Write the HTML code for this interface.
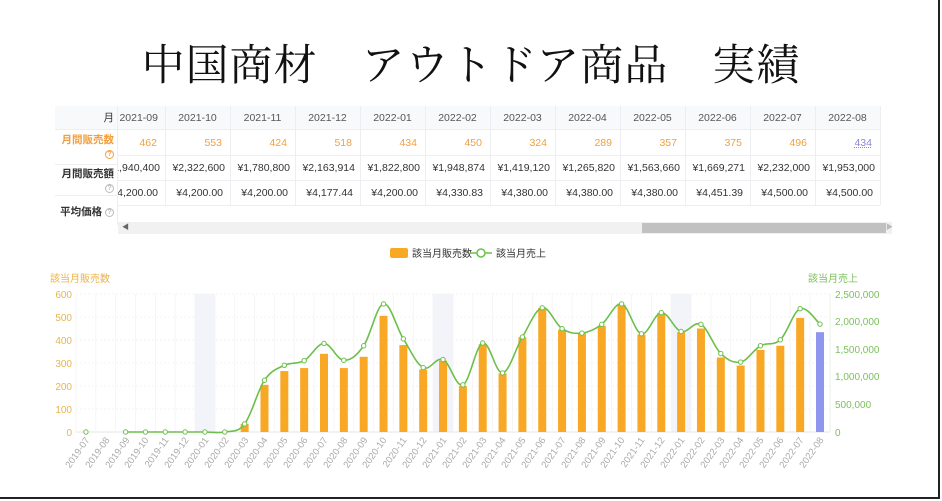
<!DOCTYPE html>
<html><head><meta charset="utf-8">
<style>
*{margin:0;padding:0;box-sizing:border-box}
body{width:942px;height:501px;background:#fff;position:relative;overflow:hidden;font-family:"Liberation Sans","Noto Sans CJK JP",sans-serif}
.frame-r{position:absolute;left:938px;top:0;width:2px;height:499px;background:#222}
.frame-b{position:absolute;left:0;top:497px;width:940px;height:2px;background:#222}
h1{position:absolute;left:0;width:942px;top:32px;text-align:center;font-family:"Noto Serif CJK JP","Noto Serif CJK SC",serif;font-weight:400;font-size:43px;color:#111;letter-spacing:1px;white-space:pre}
.hd{position:absolute;top:106px;height:23px;background:#f8f9fb}
.cell{position:absolute;font-size:10.5px;color:#333;text-align:right;white-space:nowrap}
.vl{position:absolute;width:1px;background:#eceef2}
.hl{position:absolute;height:1px;background:#eceef2}
.q{display:inline-block;width:9px;height:9px;border:1px solid #bbb;border-radius:50%;font-size:7px;line-height:7px;text-align:center;color:#bbb;vertical-align:middle}
.lab{position:absolute;left:50px;width:68px;text-align:right;font-size:10.5px;font-weight:bold;color:#333;padding-right:4px;white-space:nowrap;line-height:14px}
</style></head><body>
<h1>中国商材　アウトドア商品　実績</h1>

<!-- table -->
<div class="hd" style="left:55px;width:825px"></div>
<div class="hl" style="left:118px;top:129px;width:762px"></div>
<div class="hl" style="left:118px;top:155px;width:762px"></div>
<div class="hl" style="left:118px;top:180px;width:762px"></div>
<div class="hl" style="left:118px;top:205px;width:762px"></div>
<div id="cols"></div>
<div style="position:absolute;left:222px;top:222px;width:1px;height:1px"></div>
<div style="position:absolute;left:118px;top:222px;width:774px;height:12px;background:#f1f1f1"></div>
<div style="position:absolute;left:642px;top:223px;width:244px;height:10px;background:#c1c1c1"></div>
<div style="position:absolute;left:122px;top:222px;font-size:7px;color:#666">◀</div>
<div style="position:absolute;left:886px;top:222px;font-size:7px;color:#bbb">▶</div>

<svg id="ch" width="942" height="501" style="position:absolute;left:0;top:0" font-family="Liberation Sans, Noto Sans CJK JP, sans-serif">
<rect x="390" y="248" width="18" height="10" rx="2" fill="#f9a825"/>
<text x="412" y="257" font-size="10" fill="#333">該当月販売数</text>
<line x1="470" y1="253" x2="492" y2="253" stroke="#6cc04a" stroke-width="1.5"/>
<circle cx="481" cy="253" r="4" fill="#fff" stroke="#6cc04a" stroke-width="1.5"/>
<text x="496" y="257" font-size="10" fill="#333">該当月売上</text>
<text x="50" y="282" font-size="10" fill="#e9b44c">該当月販売数</text>
<text x="808" y="282" font-size="10" fill="#7cc05a">該当月売上</text>
<g font-size="10" fill="#e9b44c" text-anchor="end">
<text x="72" y="298">600</text><text x="72" y="321">500</text><text x="72" y="344">400</text><text x="72" y="367">300</text><text x="72" y="390">200</text><text x="72" y="413">100</text><text x="72" y="436">0</text>
</g>
<g font-size="10" fill="#7cc05a">
<text x="835" y="298">2,500,000</text><text x="835" y="325">2,000,000</text><text x="835" y="353">1,500,000</text><text x="835" y="380">1,000,000</text><text x="835" y="408">500,000</text><text x="835" y="436">0</text>
</g>
<line x1="76" y1="294" x2="76" y2="432" stroke="#e9c46a"/>
<line x1="830" y1="294" x2="830" y2="432" stroke="#8cc86a"/>
<g id="grid"></g>
<g id="bars"></g>
<path id="ln" fill="none" stroke="#6cc04a" stroke-width="1.6"/>
<g id="pts"></g>
<g font-size="9.5" fill="#aaa" id="xl">
<text transform="translate(90,440) rotate(-55)" text-anchor="end">2019-07</text>
<text transform="translate(110,440) rotate(-55)" text-anchor="end">2019-08</text>
<text transform="translate(130,440) rotate(-55)" text-anchor="end">2019-09</text>
<text transform="translate(149,440) rotate(-55)" text-anchor="end">2019-10</text>
<text transform="translate(169,440) rotate(-55)" text-anchor="end">2019-11</text>
<text transform="translate(189,440) rotate(-55)" text-anchor="end">2019-12</text>
<text transform="translate(209,440) rotate(-55)" text-anchor="end">2020-01</text>
<text transform="translate(229,440) rotate(-55)" text-anchor="end">2020-02</text>
<text transform="translate(249,440) rotate(-55)" text-anchor="end">2020-03</text>
<text transform="translate(268,440) rotate(-55)" text-anchor="end">2020-04</text>
<text transform="translate(288,440) rotate(-55)" text-anchor="end">2020-05</text>
<text transform="translate(308,440) rotate(-55)" text-anchor="end">2020-06</text>
<text transform="translate(328,440) rotate(-55)" text-anchor="end">2020-07</text>
<text transform="translate(348,440) rotate(-55)" text-anchor="end">2020-08</text>
<text transform="translate(368,440) rotate(-55)" text-anchor="end">2020-09</text>
<text transform="translate(387,440) rotate(-55)" text-anchor="end">2020-10</text>
<text transform="translate(407,440) rotate(-55)" text-anchor="end">2020-11</text>
<text transform="translate(427,440) rotate(-55)" text-anchor="end">2020-12</text>
<text transform="translate(447,440) rotate(-55)" text-anchor="end">2021-01</text>
<text transform="translate(467,440) rotate(-55)" text-anchor="end">2021-02</text>
<text transform="translate(487,440) rotate(-55)" text-anchor="end">2021-03</text>
<text transform="translate(506,440) rotate(-55)" text-anchor="end">2021-04</text>
<text transform="translate(526,440) rotate(-55)" text-anchor="end">2021-05</text>
<text transform="translate(546,440) rotate(-55)" text-anchor="end">2021-06</text>
<text transform="translate(566,440) rotate(-55)" text-anchor="end">2021-07</text>
<text transform="translate(586,440) rotate(-55)" text-anchor="end">2021-08</text>
<text transform="translate(606,440) rotate(-55)" text-anchor="end">2021-09</text>
<text transform="translate(625,440) rotate(-55)" text-anchor="end">2021-10</text>
<text transform="translate(645,440) rotate(-55)" text-anchor="end">2021-11</text>
<text transform="translate(665,440) rotate(-55)" text-anchor="end">2021-12</text>
<text transform="translate(685,440) rotate(-55)" text-anchor="end">2022-01</text>
<text transform="translate(705,440) rotate(-55)" text-anchor="end">2022-02</text>
<text transform="translate(725,440) rotate(-55)" text-anchor="end">2022-03</text>
<text transform="translate(744,440) rotate(-55)" text-anchor="end">2022-04</text>
<text transform="translate(764,440) rotate(-55)" text-anchor="end">2022-05</text>
<text transform="translate(784,440) rotate(-55)" text-anchor="end">2022-06</text>
<text transform="translate(804,440) rotate(-55)" text-anchor="end">2022-07</text>
<text transform="translate(824,440) rotate(-55)" text-anchor="end">2022-08</text>
</g>
</svg>

<div id="tbl">
<div class="cell" style="left:100px;width:58px;top:112px;color:#555">2021-09</div>
<div class="cell" style="left:165px;width:65px;top:112px;text-align:center;color:#555">2021-10</div>
<div class="cell" style="left:230px;width:65px;top:112px;text-align:center;color:#555">2021-11</div>
<div class="cell" style="left:295px;width:65px;top:112px;text-align:center;color:#555">2021-12</div>
<div class="cell" style="left:360px;width:65px;top:112px;text-align:center;color:#555">2022-01</div>
<div class="cell" style="left:425px;width:65px;top:112px;text-align:center;color:#555">2022-02</div>
<div class="cell" style="left:490px;width:65px;top:112px;text-align:center;color:#555">2022-03</div>
<div class="cell" style="left:555px;width:65px;top:112px;text-align:center;color:#555">2022-04</div>
<div class="cell" style="left:620px;width:65px;top:112px;text-align:center;color:#555">2022-05</div>
<div class="cell" style="left:685px;width:65px;top:112px;text-align:center;color:#555">2022-06</div>
<div class="cell" style="left:750px;width:65px;top:112px;text-align:center;color:#555">2022-07</div>
<div class="cell" style="left:815px;width:65px;top:112px;text-align:center;color:#555">2022-08</div>

<div class="cell" style="left:100px;width:57px;top:137px;color:#f0a040">462</div>
<div class="cell" style="left:165px;width:57px;top:137px;color:#f0a040">553</div>
<div class="cell" style="left:230px;width:57px;top:137px;color:#f0a040">424</div>
<div class="cell" style="left:295px;width:57px;top:137px;color:#f0a040">518</div>
<div class="cell" style="left:360px;width:57px;top:137px;color:#f0a040">434</div>
<div class="cell" style="left:425px;width:57px;top:137px;color:#f0a040">450</div>
<div class="cell" style="left:490px;width:57px;top:137px;color:#f0a040">324</div>
<div class="cell" style="left:555px;width:57px;top:137px;color:#f0a040">289</div>
<div class="cell" style="left:620px;width:57px;top:137px;color:#f0a040">357</div>
<div class="cell" style="left:685px;width:57px;top:137px;color:#f0a040">375</div>
<div class="cell" style="left:750px;width:57px;top:137px;color:#f0a040">496</div>
<div class="cell" style="left:815px;width:57px;top:137px;color:#8888dd;text-decoration:underline dotted">434</div>

<div class="cell" style="left:100px;width:60px;top:162px">¥1,940,400</div>
<div class="cell" style="left:165px;width:60px;top:162px">¥2,322,600</div>
<div class="cell" style="left:230px;width:60px;top:162px">¥1,780,800</div>
<div class="cell" style="left:295px;width:60px;top:162px">¥2,163,914</div>
<div class="cell" style="left:360px;width:60px;top:162px">¥1,822,800</div>
<div class="cell" style="left:425px;width:60px;top:162px">¥1,948,874</div>
<div class="cell" style="left:490px;width:60px;top:162px">¥1,419,120</div>
<div class="cell" style="left:555px;width:60px;top:162px">¥1,265,820</div>
<div class="cell" style="left:620px;width:60px;top:162px">¥1,563,660</div>
<div class="cell" style="left:685px;width:60px;top:162px">¥1,669,271</div>
<div class="cell" style="left:750px;width:60px;top:162px">¥2,232,000</div>
<div class="cell" style="left:815px;width:60px;top:162px">¥1,953,000</div>

<div class="cell" style="left:100px;width:58px;top:187px">¥4,200.00</div>
<div class="cell" style="left:165px;width:58px;top:187px">¥4,200.00</div>
<div class="cell" style="left:230px;width:58px;top:187px">¥4,200.00</div>
<div class="cell" style="left:295px;width:58px;top:187px">¥4,177.44</div>
<div class="cell" style="left:360px;width:58px;top:187px">¥4,200.00</div>
<div class="cell" style="left:425px;width:58px;top:187px">¥4,330.83</div>
<div class="cell" style="left:490px;width:58px;top:187px">¥4,380.00</div>
<div class="cell" style="left:555px;width:58px;top:187px">¥4,380.00</div>
<div class="cell" style="left:620px;width:58px;top:187px">¥4,380.00</div>
<div class="cell" style="left:685px;width:58px;top:187px">¥4,451.39</div>
<div class="cell" style="left:750px;width:58px;top:187px">¥4,500.00</div>
<div class="cell" style="left:815px;width:58px;top:187px">¥4,500.00</div>
</div>
<!-- fixed label column -->
<div style="position:absolute;left:55px;top:106px;width:63px;height:119px;background:#fff;border-right:1px solid #eceef2"></div>
<div style="position:absolute;left:55px;top:106px;width:63px;height:23px;background:#f8f9fb;border-right:1px solid #eceef2"></div>
<div class="hl" style="left:55px;top:129px;width:63px"></div>
<div class="hl" style="left:55px;top:164px;width:63px"></div>
<div class="hl" style="left:55px;top:195px;width:63px"></div>
<div class="lab" style="top:111px;font-weight:normal">月</div>
<div class="lab" style="top:133px;color:#f0a040">月間販売数<br><span class="q" style="border-color:#f0a040;color:#f0a040">?</span></div>
<div class="lab" style="top:167px">月間販売額<br><span class="q">?</span></div>
<div class="lab" style="top:205px">平均価格 <span class="q">?</span></div>

<div class="frame-r"></div><div class="frame-b"></div>

<script>
(function(){
var NS="http://www.w3.org/2000/svg";
function el(t,a,p){var e=document.createElementNS(NS,t);for(var k in a)e.setAttribute(k,a[k]);p.appendChild(e);return e;}
var cols=document.getElementById('cols');
for(var i=0;i<12;i++){var d=document.createElement('div');d.className='vl';d.style.left=(165+i*65)+'px';d.style.top='106px';d.style.height='99px';cols.appendChild(d);}
var d2=document.createElement('div');d2.className='vl';d2.style.left='880px';d2.style.top='106px';d2.style.height='99px';cols.appendChild(d2);
var g=document.getElementById('grid'),b=document.getElementById('bars'),P=document.getElementById('pts');
var x0=76,w=19.84,y0=432,k=138/600;
[6,18,30].forEach(function(i){el('rect',{x:x0+i*w,y:294,width:w,height:138,fill:'#f2f4fa'},g);});
for(var j=0;j<=6;j++){el('line',{x1:76,x2:830,y1:294+j*23,y2:294+j*23,stroke:j==6?'#e6e6e6':'#f3f3f3','stroke-dasharray':j==6?'':'2,2'},g);}
for(var i=0;i<=38;i++){el('line',{x1:x0+i*w,x2:x0+i*w,y1:294,y2:432,stroke:'#f5f5f5'},g);}
var bars=[0,0,0,0,0,0,0,0,35,205,265,278,340,278,327,505,378,272,310,200,382,255,412,540,445,430,462,553,424,518,434,450,324,289,357,375,496,434];
var line=[0,null,0,0,0,0,0,0,35,225,290,310,385,312,375,557,405,280,315,205,387,257,413,540,449,430,468,557,427,519,437,468,341,304,375,401,536,469];
bars.forEach(function(v,i){if(v>0)el('rect',{x:x0+i*w+w/2-4,y:y0-v*k,width:8,height:v*k,fill:i==37?'#8f96ee':'#f9a825'},b);});
var pts=[];line.forEach(function(v,i){if(v!==null)pts.push([x0+i*w+w/2,y0-v*k]);});
var dd='M'+pts[1][0]+','+pts[1][1];
for(var i=1;i<pts.length-1;i++){var p0=pts[Math.max(i-1,1)],p1=pts[i],p2=pts[i+1],p3=pts[Math.min(i+2,pts.length-1)];var t=0.35;
dd+=' C'+(p1[0]+(p2[0]-p0[0])*t/2)+','+(p1[1]+(p2[1]-p0[1])*t/2)+' '+(p2[0]-(p3[0]-p1[0])*t/2)+','+(p2[1]-(p3[1]-p1[1])*t/2)+' '+p2[0]+','+p2[1];}
document.getElementById('ln').setAttribute('d',dd);
pts.forEach(function(p){el('circle',{cx:p[0],cy:p[1],r:2.2,fill:'#fff',stroke:'#6cc04a','stroke-width':1},P);});
})();
</script>
</body></html>
